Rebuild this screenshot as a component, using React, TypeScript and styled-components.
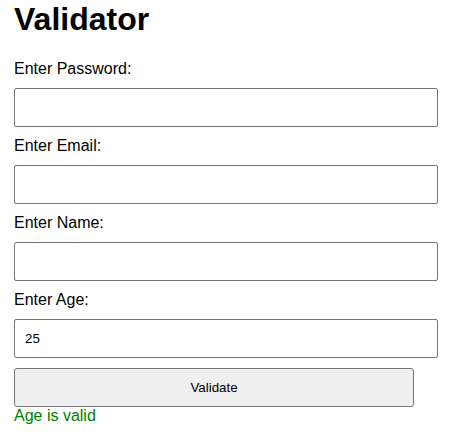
import React, { useState } from 'react';
import styled, { createGlobalStyle } from 'styled-components';

const GlobalStyle = createGlobalStyle`
  body {
    margin: 0;
    background: #ffffff;
    font-family: "Liberation Sans", Arial, sans-serif;
  }
`;

interface fieldInt {
  key: string;
  label: string;
}

const FIELDS: fieldInt[] = [
  { key: 'password', label: 'Enter Password:' },
  { key: 'email', label: 'Enter Email:' },
  { key: 'name', label: 'Enter Name:' },
  { key: 'age', label: 'Enter Age:' },
];

const App: React.FC = () => {
  const [values, setValues] = useState<Record<string, string>>({
    password: '',
    email: '',
    name: '',
    age: '25',
  });
  const [message, setMessage] = useState<string>('Age is valid');
  const [valid, setValid] = useState<boolean>(true);

  const handleChange = (key: string) => (e: React.ChangeEvent<HTMLInputElement>) => {
    setValues({ ...values, [key]: e.target.value });
  };

  const validate = () => {
    const age = Number(values.age);
    const ok = values.age !== '' && !isNaN(age) && age > 0 && age < 150;
    setValid(ok);
    setMessage(ok ? 'Age is valid' : 'Age is invalid');
  };

  return (
    <Wrap>
      <GlobalStyle />
      <Title>Validator</Title>
      {FIELDS.map((field) => (
        <Field key={field.key}>
          <Label htmlFor={field.key}>{field.label}</Label>
          <Input
            id={field.key}
            type={field.key === 'password' ? 'password' : 'text'}
            value={values[field.key]}
            onChange={handleChange(field.key)}
          />
        </Field>
      ))}
      <ValidateBtn onClick={validate}>Validate</ValidateBtn>
      <Result $valid={valid}>{message}</Result>
    </Wrap>
  );
};

export default App;

const Wrap = styled.div`
  padding: 1px 25px 0 14px;
  display: flex;
  flex-direction: column;
`;

const Title = styled.h1`
  margin: 0 0 22px;
  font-size: 32px;
  font-weight: bold;
  color: #000000;
`;

const Field = styled.div`
  display: flex;
  flex-direction: column;
  gap: 10px;
  margin-bottom: 10px;
`;

const Label = styled.label`
  font-size: 16px;
  color: #000000;
`;

const Input = styled.input`
  box-sizing: border-box;
  width: 424px;
  height: 39px;
  padding: 0 10px;
  border: 1px solid #767676;
  border-radius: 2px;
  font-family: "Liberation Sans", Arial, sans-serif;
  font-size: 13.33px;
  color: #000000;
  outline: none;
`;

const ValidateBtn = styled.button`
  box-sizing: border-box;
  width: 400px;
  height: 39px;
  background: #efefef;
  border: 1px solid #767676;
  border-radius: 3px;
  font-family: "Liberation Sans", Arial, sans-serif;
  font-size: 13.33px;
  color: #000000;
  cursor: pointer;
`;

const Result = styled.p<{ $valid: boolean }>`
  margin: 0;
  font-size: 16px;
  color: ${(p) => (p.$valid ? '#008000' : '#ff0000')};
`;
